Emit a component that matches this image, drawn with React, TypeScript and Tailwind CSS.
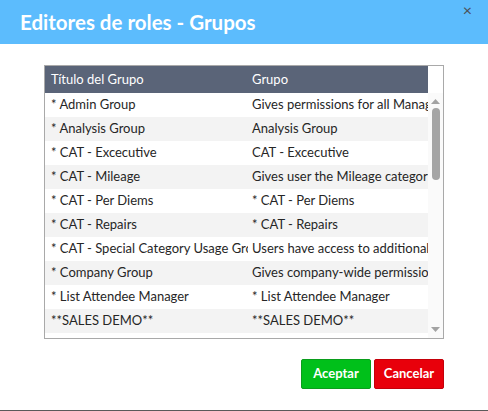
const rows: [string, string][] = [
  ["* Admin Group", "Gives permissions for all Managers"],
  ["* Analysis Group", "Analysis Group"],
  ["* CAT - Excecutive", "CAT - Excecutive"],
  ["* CAT - Mileage", "Gives user the Mileage category"],
  ["* CAT - Per Diems", "* CAT - Per Diems"],
  ["* CAT - Repairs", "* CAT - Repairs"],
  ["* CAT - Special Category Usage Group", "Users have access to additional"],
  ["* Company Group", "Gives company-wide permissions"],
  ["* List Attendee Manager", "* List Attendee Manager"],
  ["**SALES DEMO**", "**SALES DEMO**"],
];

export default function App() {
  return (
    <div className="w-[488px] h-[411px] bg-white flex flex-col font-['Lato',sans-serif] text-[#262626]">
      <div className="h-[44px] bg-[#5cbcfd] flex items-center px-5 relative">
        <h1 className="text-white font-bold text-[20.5px]">Editores de roles - Grupos</h1>
        <button className="absolute right-[16px] top-[2px] text-[#4b4f57] text-[16px] leading-none">×</button>
      </div>

      <div className="pt-[21px] px-[44px]">
        <div className="border border-[#a9a9a9] flex h-[274px]">
          <div className="w-[383px] flex flex-col text-[13px]">
            <div className="h-[27px] bg-[#5a6478] text-white flex items-center">
              <div className="w-[203px] pl-[6px]">Título del Grupo</div>
              <div className="w-[180px] pl-[4px]">Grupo</div>
            </div>
            {rows.map(([a, b], i) => (
              <div
                key={a}
                className={`h-[24px] flex items-center whitespace-nowrap ${i % 2 === 1 ? "bg-[#f3f3f3]" : "bg-white"}`}
              >
                <div className="w-[203px] pl-[6px] overflow-hidden">{a}</div>
                <div className="w-[180px] pl-[4px] overflow-hidden">{b}</div>
              </div>
            ))}
          </div>
          <div className="w-[15px] flex flex-col">
            <div className="h-[27px] bg-white" />
            <div className="flex-1 bg-[#fafafa] flex flex-col items-center pt-[6px]">
              <svg width="9" height="5" viewBox="0 0 9 5">
                <path d="M0 5 L4.5 0 L9 5 Z" fill="#a3a3a3" />
              </svg>
              <div className="w-[8px] h-[72px] rounded-full bg-[#a5a5a5] mt-[4px]" />
              <div className="flex-1" />
              <svg width="9" height="5" viewBox="0 0 9 5" className="mb-[6px]">
                <path d="M0 0 L9 0 L4.5 5 Z" fill="#a3a3a3" />
              </svg>
            </div>
          </div>
        </div>
      </div>

      <div className="flex justify-end gap-[3px] px-[44px] pt-[20px]">
        <button className="w-[70px] h-[30px] bg-[#00c01a] border border-[#0a9d1c] rounded-[2px] text-white font-bold text-[13px]">
          Aceptar
        </button>
        <button className="w-[70px] h-[30px] bg-[#e8000b] border border-[#c4000a] rounded-[2px] text-white font-bold text-[13px]">
          Cancelar
        </button>
      </div>

      <div className="flex-1" />
      <div className="h-px bg-[#5a5a5a]" />
    </div>
  );
}
